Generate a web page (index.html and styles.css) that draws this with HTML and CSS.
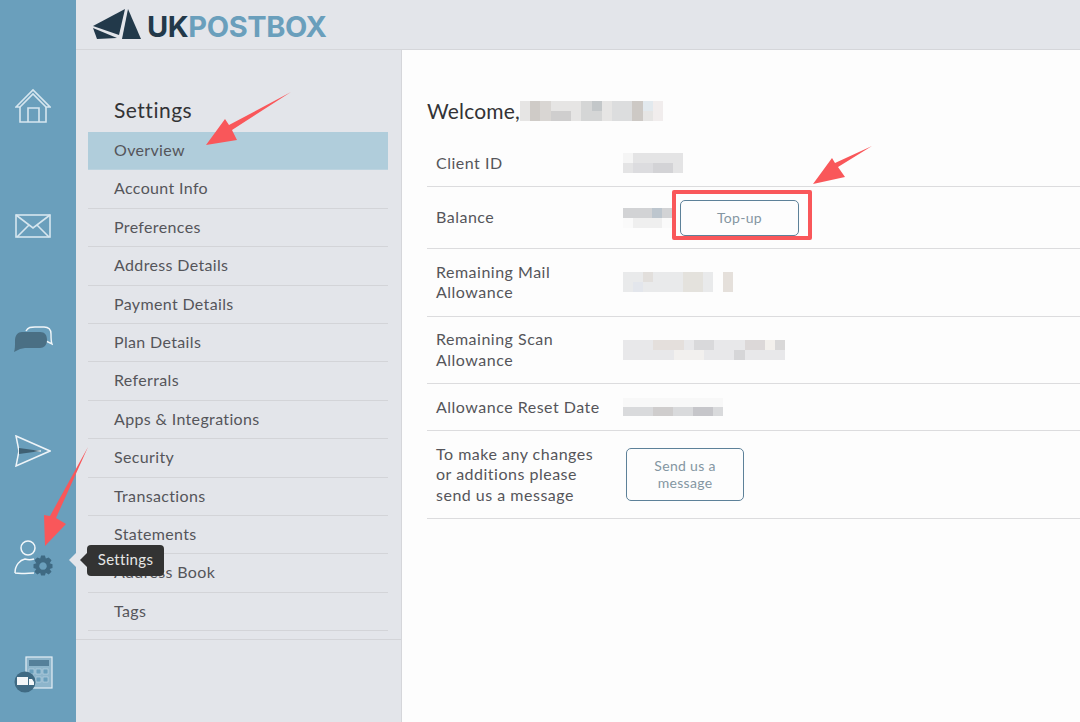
FILE: index.html
```html
<!DOCTYPE html>
<html lang="en">
<head>
<meta charset="utf-8">
<title>UK Postbox Settings</title>
<link rel="stylesheet" href="styles.css">
</head>
<body>
<div class="app">
  <nav class="rail">
    <a class="rail-item rail-home"><svg width="36" height="36" viewBox="0 0 36 36" class="ico"><path d="M1 19 18 2l17 17h-4L18 6 5 19Z"/><path d="M5 19v15h26V19M13 34V20h11v14"/></svg></a>
    <a class="rail-item rail-mail"><svg width="36" height="24" viewBox="0 0 36 24" class="ico"><rect x="1" y="1" width="34" height="22"/><path d="M1 1 18 14 35 1M2 23l12-12M34 23 22 11"/></svg></a>
    <a class="rail-item rail-chat"><svg width="40" height="26" viewBox="0 0 40 26" class="ico-chat"><path class="chat-line" d="M13 5c2-4 5-4 9-4h9c5 0 7 2 7 7 0 4 .5 9 1 10l-6-3"/><path class="chat-fill" d="M9 6h18c5 0 7 3 7 8s-3 8-7 8H12l-5 1-6 3c1-3 1-6 1-11 0-6 3-9 7-9Z"/></svg></a>
    <a class="rail-item rail-send"><svg width="36" height="32" viewBox="0 0 36 32" class="ico-send"><path class="send-line" d="M1 1 35 16 1 31l3-15Z"/><path class="send-line" d="M4 16h22"/><path class="send-dark" d="M4 13l22 3-22 3Z"/></svg></a>
    <a class="rail-item rail-settings"><svg width="40" height="38" viewBox="0 0 40 38" class="ico-user"><circle class="user-line" cx="14" cy="10" r="7"/><path class="user-line" d="M1 35c0-8 5-13 10-14 3 1 6 1 9 0M1 35c6 1 14 0 19 0"/><path class="gear" fill-rule="evenodd" d="M26 18h4l1 3 3-1 3 3-2 3 3 1v4l-3 1 2 3-3 3-3-2-1 3h-4l-1-3-3 2-3-3 2-3-3-1v-4l3-1-2-3 3-3 3 1Zm2 7a4 4 0 1 0 .01 0Z" transform="translate(2.400 .5) scale(.95)"/></svg></a>
    <a class="rail-item rail-calc"><svg width="42" height="38" viewBox="0 0 42 38" class="ico-calc"><rect class="calc-box" x="12" y="2" width="26" height="31"/><rect class="calc-key-dark" x="15" y="5" width="20" height="6"/><rect class="calc-key" x="15" y="14" width="5" height="5"/><rect class="calc-key" x="22" y="14" width="5" height="5"/><rect class="calc-key" x="29" y="14" width="5" height="5"/><rect class="calc-key" x="22" y="22" width="5" height="5"/><rect class="calc-key" x="29" y="22" width="5" height="5"/><circle class="calc-disc" cx="11" cy="27" r="10.500"/><rect class="calc-truck" x="3" y="22" width="11" height="8"/><path class="calc-truck" d="M15 24h3l2 3v3h-5Z"/></svg></a>
  </nav>
  <div class="page">
    <header class="topbar">
      <svg class="logo-mark" width="50" height="33" viewBox="0 0 50 33"><path d="M1 18 33 1l-6 26Z"/><path d="M1 20 25 30 5 31Z"/><path d="M36 1 49 31H30Z"/></svg>
      <span class="logo-text"><span class="logo-uk">UK</span><span class="logo-post">POSTBOX</span></span>
    </header>
    <div class="content">
      <aside class="subnav">
        <div class="subnav-inner">
          <h2 class="subnav-title">Settings</h2>
          <ul class="menu">
            <li class="menu-item is-active">Overview</li>
            <li class="menu-item">Account Info</li>
            <li class="menu-item">Preferences</li>
            <li class="menu-item">Address Details</li>
            <li class="menu-item">Payment Details</li>
            <li class="menu-item">Plan Details</li>
            <li class="menu-item">Referrals</li>
            <li class="menu-item">Apps &amp; Integrations</li>
            <li class="menu-item">Security</li>
            <li class="menu-item">Transactions</li>
            <li class="menu-item">Statements</li>
            <li class="menu-item">Address Book</li>
            <li class="menu-item">Tags</li>
          </ul>
        </div>
      </aside>
      <main class="main">
        <h1 class="welcome">Welcome,<svg class="mosaic mosaic-name" width="143" height="20" viewBox="0 0 14 2" preserveAspectRatio="none" shape-rendering="crispEdges"><rect width="14" height="2" fill="#e6e5e4"/><rect x="1" width="1" height="2" fill="#cfcbc7"/><rect x="2" width="1" height="2" fill="#d9d6d3"/><rect x="3" y="1" width="2" height="1" fill="#cfcece"/><rect x="6" width="2" height="2" fill="#d5d6d6"/><rect x="7" width="1" height="1" fill="#c3c7c9"/><rect x="9" width="2" height="2" fill="#dcddde"/><rect x="11" width="1" height="2" fill="#cdc9c5"/><rect x="12" width="1" height="1" fill="#e2e9ee"/><rect x="13" width="1" height="2" fill="#f1eded"/></svg></h1>
        <div class="rows">
          <div class="row"><div class="label">Client ID</div><div class="value"><svg class="mosaic" width="60" height="20" viewBox="0 0 6 2" preserveAspectRatio="none" shape-rendering="crispEdges"><rect width="6" height="2" fill="#e4e4e5"/><rect width="1" height="1" fill="#f5f5f5"/><rect x="3" y="1" width="2" height="1" fill="#d3d3d6"/><rect x="1" y="1" width="2" height="1" fill="#dcdcdf"/></svg></div></div>
          <div class="row"><div class="label">Balance</div><div class="value value-balance"><svg class="mosaic" width="49" height="20" viewBox="0 0 5 2" preserveAspectRatio="none" shape-rendering="crispEdges"><rect width="5" height="1" fill="#d2d3d5"/><rect x="1" y="1" width="3" height="1" fill="#efefef"/><rect y="1" width="1" height="1" fill="#fafafa"/><rect x="4" y="1" width="1" height="1" fill="#fafafa"/><rect x="3" width="1" height="1" fill="#bdc6ce"/></svg><button class="btn btn-topup">Top-up</button></div></div>
          <div class="row"><div class="label">Remaining Mail<br>Allowance</div><div class="value"><svg class="mosaic" width="110" height="20" viewBox="0 0 11 2" preserveAspectRatio="none" shape-rendering="crispEdges"><rect width="9" height="2" fill="#e9eaeb"/><rect x="2" y="0" width="1" height="1" fill="#e2dfdc"/><rect x="1" y="1" width="1" height="1" fill="#e3e6ec"/><rect x="6" width="2" height="2" fill="#e4e2dd"/><rect x="10" width="1" height="2" fill="#e5e0db"/></svg></div></div>
          <div class="row"><div class="label">Remaining Scan<br>Allowance</div><div class="value"><svg class="mosaic" width="162" height="20" viewBox="0 0 16 2" preserveAspectRatio="none" shape-rendering="crispEdges"><rect width="16" height="2" fill="#e8e8ea"/><rect x="3" width="3" height="1" fill="#e4dfdc"/><rect x="7" width="2" height="1" fill="#d9d9db"/><rect x="12" width="2" height="1" fill="#dcd8d8"/><rect x="15" width="1" height="1" fill="#d9d8d8"/><rect x="11" y="1" width="1" height="1" fill="#d6d6d8"/><rect x="14" y="0" width="1" height="1" fill="#f3f0ec"/><rect x="5" y="1" width="3" height="1" fill="#f2f0ee"/></svg></div></div>
          <div class="row"><div class="label">Allowance Reset Date</div><div class="value"><svg class="mosaic" width="100" height="18" viewBox="0 0 10 2" preserveAspectRatio="none" shape-rendering="crispEdges"><rect width="10" height="1" fill="#f8f8f8"/><rect y="1" width="10" height="1" fill="#d9dadc"/><rect x="3" y="1" width="2" height="1" fill="#cfcdcd"/><rect x="7" y="1" width="2" height="1" fill="#c6c6ca"/></svg></div></div>
          <div class="row row-last"><div class="label">To make any changes<br>or additions please<br>send us a message</div><div class="value"><button class="btn btn-message">Send us a<br>message</button></div></div>
        </div>
      </main>
    </div>
  </div>
</div>
<div class="tooltip-notch"></div>
<div class="tooltip">Settings</div>
<div class="red-box"></div>
<svg class="annotations" width="1080" height="722" viewBox="0 0 1080 722">
  <path d="M291 92 232 130 237 140 206 145 225 119 229 125Z"/>
  <path d="M872 146 838 167 845 177 813 184 832 158 835 163Z"/>
  <path d="M88 447 56 518 66 524 45 546 44 515 50 516Z"/>
</svg>
</body>
</html>
```
FILE: styles.css
```css
* { box-sizing: border-box; }
html, body { margin: 0; height: 100%; overflow: hidden; }
body {
  font-family: "Lato", "Open Sans", sans-serif;
  font-size: 16px;
  color: #4b4b4f;
  background: #fdfdfd;
}
.app { display: flex; height: 722px; }

/* Left rail */
.rail { width: 76px; flex: none; background: #6a9fbc; display: flex; flex-direction: column; }
.rail-item { display: block; }
.rail-item svg { display: block; }
.rail-home { margin: 88px 0 0 15px; }
.rail-mail { margin: 90px 0 0 15px; }
.rail-chat { margin: 88px 0 0 13px; }
.rail-send { margin: 83px 0 0 15px; }
.rail-settings { margin: 71px 0 0 14px; }
.rail-calc { margin: 79px 0 0 14px; }
.ico { fill: none; stroke: #d6e6ef; stroke-width: 1.6; }
.chat-line { fill: none; stroke: #f1f6f9; stroke-width: 1.4; }
.chat-fill { fill: #4a6f84; }
.send-line { fill: none; stroke: #eef4f8; stroke-width: 1.5; }
.send-dark { fill: #3f6073; }
.user-line { fill: none; stroke: #f2f7fa; stroke-width: 1.5; }
.gear { fill: #3f6a83; }
.calc-box { fill: #8db5cb; stroke: #e4eff5; stroke-width: 1.2; }
.calc-key-dark { fill: #55809a; }
.calc-key { fill: #6a9fbc; stroke: #cfe0ea; stroke-width: .5; }
.calc-disc { fill: #3f6a83; }
.calc-truck { fill: #f3f6f8; }

/* Top bar */
.page { flex: 1; min-width: 0; display: flex; flex-direction: column; }
.topbar {
  height: 50px; flex: none; background: #e3e5ea; border-bottom: 1px solid #d5d6da;
  display: flex; align-items: center; padding: 0 0 0 16px;
}
.logo-mark { fill: #22394a; flex: none; margin: -1px 0 0 0; }
.logo-text { font-family: "Inter", sans-serif; font-size: 29px; font-weight: 700; letter-spacing: -.4px; margin: 4px 0 0 5px; }
.logo-uk { color: #22394a; }
.logo-post { color: #6a9fbc; }

/* Second column */
.content { flex: 1; display: flex; min-height: 0; }
.subnav { width: 326px; flex: none; background: #e3e5ea; border-right: 1px solid #d5d6da; }
.subnav-inner { padding: 47px 13px 8px 12px; border-bottom: 1px solid #d3d4d8; }
.subnav-title { margin: 0 0 9px 26px; font-size: 21px; line-height: 26px; font-weight: 400; color: #333336; letter-spacing: .5px; }
.menu { list-style: none; margin: 0; padding: 0; }
.menu-item {
  height: 38.4px; line-height: 36px; padding-left: 26px;
  border-bottom: 1px solid #d3d4d8; letter-spacing: .35px; color: #55555a;
}
.is-active { background: #b0cddb; border-bottom-color: #bcd3df; }

/* Main */
.main { flex: 1; min-width: 0; padding: 48px 0 0 25px; background: #fdfdfd; }
.welcome { margin: 0 0 16px; height: 26px; font-size: 21px; line-height: 26px; font-weight: 400; color: #333336; display: flex; align-items: center; letter-spacing: .2px; }
.rows { display: flex; flex-direction: column; }
.row {
  display: grid; grid-template-columns: 196px 1fr; align-items: center;
  padding: 12.7px 0; line-height: 20.5px; border-bottom: 1px solid #dcdcde;
  font-size: 16px; letter-spacing: .5px;
}
.label { padding-left: 9px; color: #55555a; }
.value { display: flex; align-items: center; }
.mosaic { display: block; flex: none; filter: blur(.7px); }
.mosaic-name { margin-left: 0; }
.btn {
  display: block; font: inherit; font-size: 14px; line-height: 17px; letter-spacing: .3px;
  color: #8496a2; background: #fdfdfd; border: 1px solid #5d8199; border-radius: 5px;
}
.btn-topup { width: 119px; height: 36px; margin-left: 8px; }
.btn-message { width: 118px; height: 53px; margin-left: 3px; }

/* Overlays */
.tooltip {
  position: absolute; left: 87px; top: 545px; width: 77px; height: 31px;
  background: #333; border-radius: 4px; color: #e6e6e6; font-size: 15px;
  line-height: 29px; text-align: center; letter-spacing: .3px;
}
.tooltip::before {
  content: ""; position: absolute; left: -7px; top: 8px;
  border-style: solid; border-width: 7px 7px 7px 0; border-color: transparent #333 transparent transparent;
}
.tooltip-notch {
  position: absolute; left: 69px; top: 553px;
  border-style: solid; border-width: 7px 7px 7px 0; border-color: transparent #e3e5ea transparent transparent;
}
.red-box { position: absolute; left: 672px; top: 190px; width: 140px; height: 50px; border: 4px solid #f9575a; border-radius: 2px; }
.annotations { position: absolute; left: 0; top: 0; fill: #f9575a; pointer-events: none; }
```
